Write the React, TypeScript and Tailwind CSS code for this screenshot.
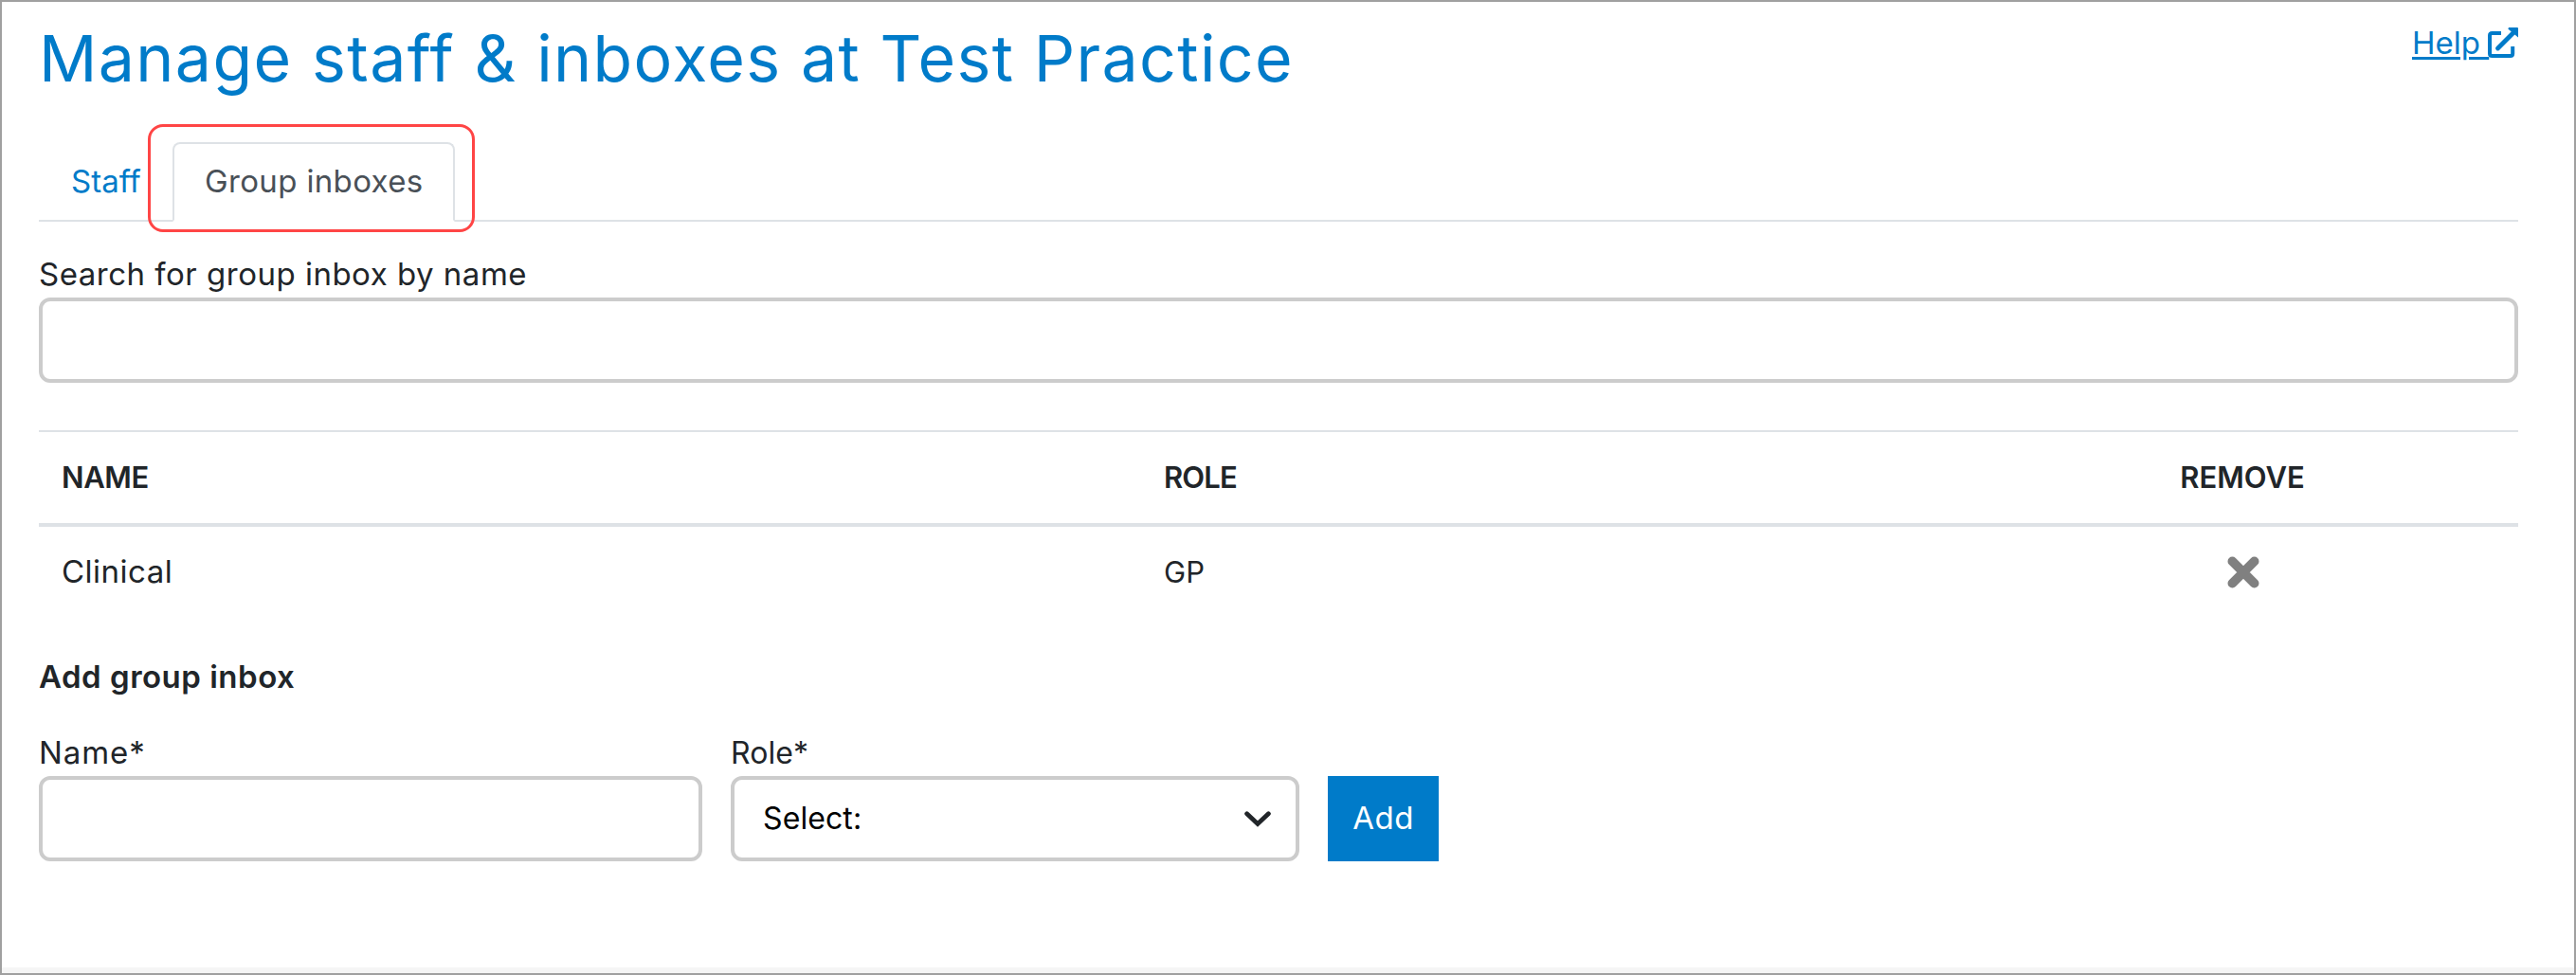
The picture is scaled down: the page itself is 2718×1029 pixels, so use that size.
import { useState } from "react"
import type { ReactNode } from "react"

type GroupInbox = {
  id: number
  name: string
  role: string
}

const initialInboxes: GroupInbox[] = [{ id: 1, name: "Clinical", role: "GP" }]

function ExternalLinkIcon() {
  return (
    <svg viewBox="0 0 32 32" className="block h-8 w-8" fill="none" stroke="currentColor" strokeWidth="4">
      <path d="M14 6H4.500Q2 6 2 8.500V27.500Q2 30 4.500 30H23.700Q26.200 30 26.200 27.500V20" />
      <path d="M10.500 22L27 5.500" strokeLinecap="round" strokeWidth="4.800" />
      <path d="M22 0H31Q32 0 32 1V10.500L21.300 1.500Z" fill="currentColor" stroke="none" />
    </svg>
  )
}

function ChevronIcon() {
  return (
    <svg viewBox="0 0 28 17" className="h-[17px] w-7" fill="none" stroke="#212529" strokeWidth="4.800" strokeLinecap="round">
      <path d="M2.600 2.800L14 13.500L25.400 2.800" />
    </svg>
  )
}

function RemoveIcon() {
  return (
    <svg viewBox="0 0 34 34" className="block h-[34px] w-[34px]" stroke="#808080" strokeWidth="9.800" strokeLinecap="round">
      <path d="M5.400 5.400L28.600 28.600M28.600 5.400L5.400 28.600" />
    </svg>
  )
}

function Label({ htmlFor, children }: { htmlFor: string; children: ReactNode }) {
  return (
    <label htmlFor={htmlFor} className="block whitespace-nowrap leading-[47px] pb-px">
      {children}
    </label>
  )
}

export default function App() {
  const [inboxes, setInboxes] = useState(initialInboxes)
  const [search, setSearch] = useState("")
  const [name, setName] = useState("")

  const visible = inboxes.filter((i) => i.name.toLowerCase().includes(search.toLowerCase()))

  const removeInbox = (id: number) => {
    setInboxes((prev) => prev.filter((i) => i.id !== id))
  }

  const addInbox = () => {
    if (!name) return
    setInboxes((prev) => [...prev, { id: Date.now(), name, role: "GP" }])
    setName("")
  }

  return (
    <div className="flex h-[1029px] w-[2718px] flex-col border-2 border-[#a0a0a0] bg-white font-['Inter',sans-serif] text-[33px] text-[#212529]">
      <div className="flex-1 pl-[39px] pr-[59px]">
        <header className="flex h-[120px] items-start justify-between">
          <h1 className="whitespace-nowrap text-[68px] leading-[118px] tracking-[1.36px] text-[#007bc9]">
            Manage staff &amp; inboxes at Test Practice
          </h1>
          <a href="#" className="mt-[19px] flex h-12 items-center text-[#007bc9]">
            <span className="w-20 whitespace-pre leading-[48px] underline decoration-[3px] underline-offset-[3px]">Help </span>
            <ExternalLinkIcon />
          </a>
        </header>

        <nav className="mt-7 flex h-[84px] border-b-2 border-[#dee2e6] leading-[83px]">
          <a href="#" className="w-[141px] pl-[34px] text-[#007bc9]">
            Staff
          </a>
          <div className="relative h-[84px] w-[298px] rounded-t-lg border-2 border-[#dee2e6] border-b-white bg-white pl-8 leading-[79px] text-[#495057]">
            <span className="whitespace-nowrap tracking-[0.35px]">Group inboxes</span>
            <div className="absolute -left-[28px] -top-[21px] h-[114px] w-[345px] rounded-2xl border-[3px] border-[#ff4545]" />
          </div>
        </nav>

        <div className="pt-8 tracking-[0.5px]">
          <Label htmlFor="search">Search for group inbox by name</Label>
          <input
            id="search"
            value={search}
            onChange={(e) => setSearch(e.target.value)}
            className="block h-[90px] w-full rounded-xl border-4 border-[#ccc] px-8 outline-none"
          />
        </div>

        <div className="mt-[50px] border-t-2 border-[#dee2e6]">
          <div className="flex h-[100px] border-b-4 border-[#dee2e6] text-[31px] font-semibold leading-[96px]">
            <div className="w-[1163px] pl-6 tracking-[-0.4px]">NAME</div>
            <div className="flex-1 pl-6 tracking-[-0.9px]">ROLE</div>
            <div className="w-[582px] text-center">REMOVE</div>
          </div>
          {visible.map((inbox) => (
            <div key={inbox.id} className="flex h-24 leading-[95px]">
              <div className="w-[1163px] pl-6 tracking-[0.5px]">{inbox.name}</div>
              <div className="flex-1 pl-6 text-[31px]">{inbox.role}</div>
              <div className="flex w-[582px] items-center justify-center pl-px">
                <button onClick={() => removeInbox(inbox.id)} aria-label="Remove">
                  <RemoveIcon />
                </button>
              </div>
            </div>
          ))}
        </div>

        <h2 className="mt-[39px] pb-px font-semibold leading-[47px] tracking-[0.5px]">Add group inbox</h2>
        <div className="mt-8 flex items-end gap-[30px]">
          <div className="w-[700px] tracking-[0.9px]">
            <Label htmlFor="name">Name*</Label>
            <input
              id="name"
              value={name}
              onChange={(e) => setName(e.target.value)}
              className="block h-[90px] w-full rounded-xl border-4 border-[#ccc] px-8 outline-none"
            />
          </div>
          <div className="w-[600px] text-[32px] tracking-[0.1px]">
            <Label htmlFor="role">Role*</Label>
            <button id="role" className="flex h-[90px] w-full items-center justify-between rounded-xl border-4 border-[#ccc] pl-[30px] pr-[26px] text-black">
              <span>Select:</span>
              <ChevronIcon />
            </button>
          </div>
          <button onClick={addInbox} className="h-[90px] w-[117px] bg-[#007bc9] tracking-[0.5px] text-white">
            Add
          </button>
        </div>
      </div>
      <div className="h-1.5 bg-[#f5f5f5]" />
    </div>
  )
}
